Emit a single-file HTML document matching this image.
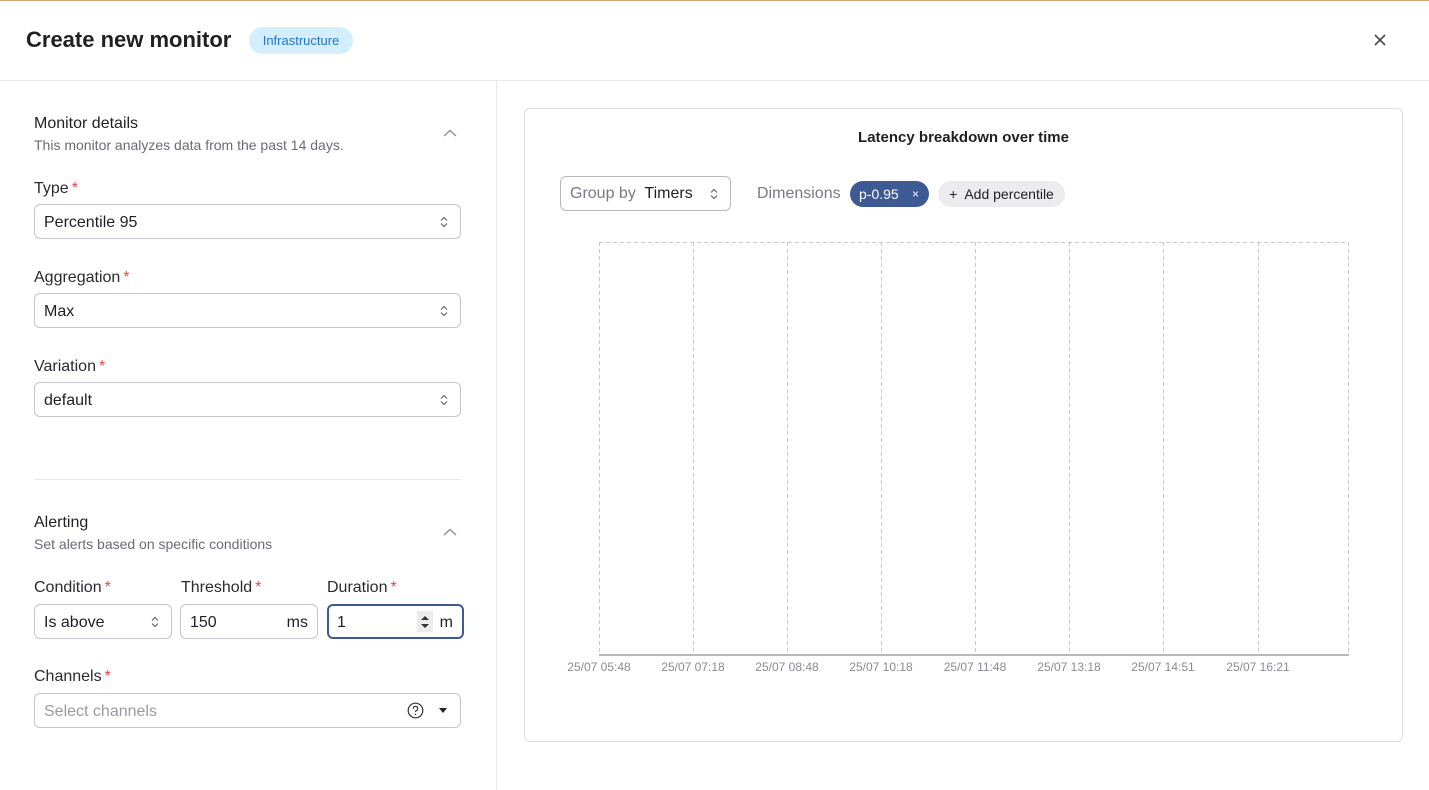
<!DOCTYPE html>
<html><head><meta charset="utf-8"><style>
*{box-sizing:border-box;margin:0;padding:0}
body{width:1429px;height:790px;background:#fff;font-family:"Liberation Sans",sans-serif;color:#1f1f24;position:relative;overflow:hidden}
.a{position:absolute}
.lbl{font-size:16px;color:#2a2a30}
.lbl b{color:#e5484d;font-weight:normal;margin-left:3px}
.inp{position:absolute;border:1px solid #c4c4cc;border-radius:6px;height:35px;font-size:16px;padding-left:9px;line-height:35px;color:#1f1f24}
.chev{position:absolute;right:12px;top:11px}
.xl{position:absolute;font-size:12px;color:#8a8a94;top:660px;width:90px;text-align:center}
</style></head><body>
<div class="a" style="left:0;top:0;width:1429px;height:1px;background:#d4a57a"></div>
<div class="a" style="left:26px;top:27px;font-size:22px;font-weight:bold;color:#1f1f24">Create new monitor</div>
<div class="a" style="left:249px;top:27px;width:104px;height:27px;border-radius:14px;background:#d3effd;color:#2574c8;font-size:13px;line-height:27px;text-align:center">Infrastructure</div>
<svg class="a" style="left:1374px;top:34px" width="12" height="12" viewBox="0 0 12 12"><path d="M1 1L11 11M11 1L1 11" stroke="#4a4a55" stroke-width="1.6"/></svg>
<div class="a" style="left:0;top:80px;width:1429px;height:1px;background:#e8e8ec"></div>
<div class="a" style="left:496px;top:81px;width:1px;height:709px;background:#e8e8ec"></div>

<div class="a" style="left:34px;top:115px;font-size:16px">Monitor details</div>
<div class="a" style="left:34px;top:137px;font-size:14px;color:#6b6b76">This monitor analyzes data from the past 14 days.</div>
<svg class="a" style="left:443px;top:129px" width="14" height="9"><path d="M1 7L7 1.5L13 7" fill="none" stroke="#8a8a94" stroke-width="1.3"/></svg>

<div class="a lbl" style="left:34px;top:180px">Type<b>*</b></div>
<div class="inp" style="left:34px;top:204px;width:427px">Percentile 95<svg class="chev" width="8" height="12"><path d="M1 4.5L4 1.5L7 4.5M1 7.5L4 10.5L7 7.5" fill="none" stroke="#666" stroke-width="1.2"/></svg></div>
<div class="a lbl" style="left:34px;top:269px">Aggregation<b>*</b></div>
<div class="inp" style="left:34px;top:293px;width:427px">Max<svg class="chev" width="8" height="12"><path d="M1 4.5L4 1.5L7 4.5M1 7.5L4 10.5L7 7.5" fill="none" stroke="#666" stroke-width="1.2"/></svg></div>
<div class="a lbl" style="left:34px;top:358px">Variation<b>*</b></div>
<div class="inp" style="left:34px;top:382px;width:427px">default<svg class="chev" width="8" height="12"><path d="M1 4.5L4 1.5L7 4.5M1 7.5L4 10.5L7 7.5" fill="none" stroke="#666" stroke-width="1.2"/></svg></div>

<div class="a" style="left:34px;top:479px;width:427px;height:1px;background:#e8e8ec"></div>
<div class="a" style="left:34px;top:514px;font-size:16px">Alerting</div>
<div class="a" style="left:34px;top:536px;font-size:14px;color:#6b6b76">Set alerts based on specific conditions</div>
<svg class="a" style="left:443px;top:528px" width="14" height="9"><path d="M1 7L7 1.5L13 7" fill="none" stroke="#8a8a94" stroke-width="1.3"/></svg>

<div class="a lbl" style="left:34px;top:579px">Condition<b>*</b></div>
<div class="a lbl" style="left:181px;top:579px">Threshold<b>*</b></div>
<div class="a lbl" style="left:327px;top:579px">Duration<b>*</b></div>
<div class="inp" style="left:34px;top:604px;width:138px">Is above<svg class="chev" width="8" height="12"><path d="M1 4.5L4 1.5L7 4.5M1 7.5L4 10.5L7 7.5" fill="none" stroke="#666" stroke-width="1.2"/></svg></div>
<div class="inp" style="left:180px;top:604px;width:138px">150<span style="position:absolute;right:9px">ms</span></div>
<div class="inp" style="left:327px;top:604px;width:137px;border:2px solid #3d5a94;padding-left:8px;line-height:33px">1<span style="position:absolute;left:88px;top:5px;width:16px;height:21px;background:#ececef"></span><svg style="position:absolute;left:91px;top:9px" width="10" height="14"><path d="M1 5L5 1L9 5ZM1 9L5 13L9 9Z" fill="#333"/></svg><span style="position:absolute;right:9px">m</span></div>

<div class="a lbl" style="left:34px;top:668px">Channels<b>*</b></div>
<div class="inp" style="left:34px;top:693px;width:427px;color:#9a9aa3">Select channels
<svg style="position:absolute;left:372px;top:8px" width="17" height="17"><circle cx="8.5" cy="8.5" r="7.3" fill="none" stroke="#333" stroke-width="1.2"/><path d="M6.3 6.6a2.2 2.2 0 1 1 3 2c-.6.3-.8.7-.8 1.4" fill="none" stroke="#333" stroke-width="1.2"/><circle cx="8.5" cy="12.3" r=".8" fill="#333"/></svg>
<svg style="position:absolute;left:404px;top:14px" width="8" height="6"><path d="M0 0H8L4 5Z" fill="#222"/></svg></div>

<div class="a" style="left:524px;top:108px;width:879px;height:634px;border:1px solid #dcdce2;border-radius:6px"></div>
<div class="a" style="left:524px;top:129px;width:879px;text-align:center;font-size:15px;font-weight:bold">Latency breakdown over time</div>
<div class="a" style="left:560px;top:176px;width:171px;height:35px;border:1px solid #b8b8c2;border-radius:6px;font-size:16px;line-height:33px;padding-left:9px;color:#7a7a85">Group by&nbsp; <span style="color:#1f1f24">Timers</span><svg style="position:absolute;right:12px;top:11px" width="8" height="12"><path d="M1 4.5L4 1.5L7 4.5M1 7.5L4 10.5L7 7.5" fill="none" stroke="#666" stroke-width="1.2"/></svg></div>
<div class="a" style="left:757px;top:185px;font-size:16px;color:#7a7a85">Dimensions</div>
<div class="a" style="left:850px;top:181px;width:79px;height:26px;border-radius:13px;background:#3d5a94;color:#fff;font-size:14px;line-height:26px;padding-left:9px">p-0.95<span style="position:absolute;right:10px;font-size:12px">×</span></div>
<div class="a" style="left:938px;top:181px;width:127px;height:26px;border-radius:13px;background:#ececef;color:#1f1f24;font-size:14px;line-height:26px;text-align:center">+&nbsp; Add percentile</div>

<svg class="a" style="left:590px;top:235px" width="770" height="430">
<g stroke="#c8c8ce" stroke-dasharray="4 3" fill="none">
<line x1="9" y1="7.5" x2="758" y2="7.5"/>
<line x1="9.5" y1="7" x2="9.5" y2="420"/><line x1="103.5" y1="7" x2="103.5" y2="420"/><line x1="197.5" y1="7" x2="197.5" y2="420"/><line x1="291.5" y1="7" x2="291.5" y2="420"/><line x1="385.5" y1="7" x2="385.5" y2="420"/><line x1="479.5" y1="7" x2="479.5" y2="420"/><line x1="573.5" y1="7" x2="573.5" y2="420"/><line x1="668.5" y1="7" x2="668.5" y2="420"/><line x1="758.5" y1="7" x2="758.5" y2="420"/>
</g>
<line x1="9" y1="420" x2="759" y2="420" stroke="#b8b8c0" stroke-width="2"/>
</svg>
<div class="xl" style="left:554px">25/07 05:48</div>
<div class="xl" style="left:648px">25/07 07:18</div>
<div class="xl" style="left:742px">25/07 08:48</div>
<div class="xl" style="left:836px">25/07 10:18</div>
<div class="xl" style="left:930px">25/07 11:48</div>
<div class="xl" style="left:1024px">25/07 13:18</div>
<div class="xl" style="left:1118px">25/07 14:51</div>
<div class="xl" style="left:1213px">25/07 16:21</div>
</body></html>
